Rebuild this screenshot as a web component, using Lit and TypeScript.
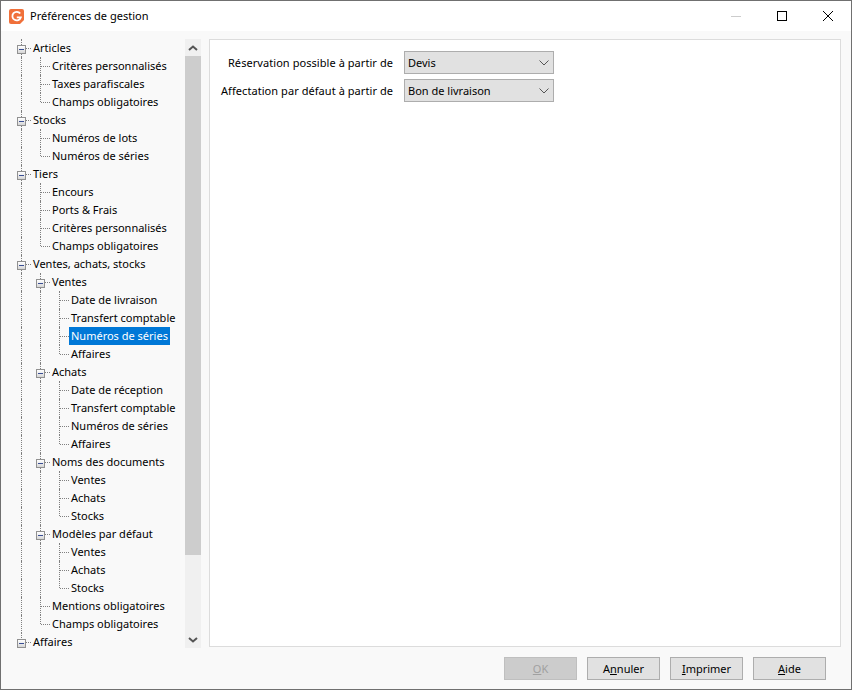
import { LitElement, html, css, nothing } from "lit";
import { customElement } from "lit/decorators.js";

const ROWS: [number, string, boolean?, boolean?][] = [
  [0, "Articles", true], [1, "Critères personnalisés"], [1, "Taxes parafiscales"], [1, "Champs obligatoires"],
  [0, "Stocks", true], [1, "Numéros de lots"], [1, "Numéros de séries"],
  [0, "Tiers", true], [1, "Encours"], [1, "Ports & Frais"], [1, "Critères personnalisés"], [1, "Champs obligatoires"],
  [0, "Ventes, achats, stocks", true],
  [1, "Ventes", true], [2, "Date de livraison"], [2, "Transfert comptable"], [2, "Numéros de séries", false, true], [2, "Affaires"],
  [1, "Achats", true], [2, "Date de réception"], [2, "Transfert comptable"], [2, "Numéros de séries"], [2, "Affaires"],
  [1, "Noms des documents", true], [2, "Ventes"], [2, "Achats"], [2, "Stocks"],
  [1, "Modèles par défaut", true], [2, "Ventes"], [2, "Achats"], [2, "Stocks"],
  [1, "Mentions obligatoires"], [1, "Champs obligatoires"],
  [0, "Affaires", true],
];

function continues(i: number, depth: number): boolean {
  for (let j = i + 1; j < ROWS.length; j++) {
    if (ROWS[j][0] < depth) return false;
    if (ROWS[j][0] === depth) return true;
  }
  return false;
}

@customElement("app-root")
export class AppRoot extends LitElement {
  static styles = css`
    :host { display: block; width: 852px; height: 690px; font-family: "Noto Sans", sans-serif; font-size: 11px; color: #000; }
    * { box-sizing: border-box; }
    .win { width: 852px; height: 690px; border: 1px solid #707070; background: #f9f9f9; display: flex; flex-direction: column; }
    .title { height: 30px; flex: none; background: #fff; display: flex; align-items: center; padding-left: 8px; }
    .title .logo { width: 15px; height: 15px; margin-right: 6px; flex: none; }
    .title .t { flex: 1; margin-bottom: 2px; }
    .wb { width: 46px; height: 30px; display: flex; align-items: center; justify-content: center; }
    .main { flex: 1; display: flex; min-height: 0; padding: 8px 10px 0 11px; }
    .side { width: 189px; height: 609px; flex: none; display: flex; }
    .tree { width: 173px; flex: none; overflow: hidden; white-space: nowrap; }
    .row { height: 18px; display: flex; }
    .cell { width: 19px; flex: none; position: relative; height: 18px; }
    .v { position: absolute; left: 9px; top: 0; bottom: 0; border-left: 1px dotted #808080; }
    .v.half { bottom: 9px; }
    .h { position: absolute; left: 10px; right: 0; top: 9px; border-top: 1px dotted #808080; }
    .exp { position: absolute; left: 5px; top: 6px; width: 9px; height: 9px; border: 1px solid #919191; background: linear-gradient(#fff, #d6d6d6); display: flex; align-items: center; justify-content: center; }
    .exp i { width: 5px; height: 1px; background: #3a4f94; display: block; }
    .label { padding: 0 2px; height: 18px; line-height: 18px; color: #000; flex: none; }
    .label.sel { background: #0078d7; color: #fff; }
    .sb { width: 16px; flex: none; background: #f0f0f0; display: flex; flex-direction: column; }
    .sb .btn { height: 17px; flex: none; display: flex; align-items: center; justify-content: center; }
    .sb .thumb { height: 499px; flex: none; background: #cdcdcd; }
    .sb .sp { flex: 1; }
    .panel { flex: 1; margin-left: 8px; background: #fff; height: 608px; border: 1px solid #dcdcdc; padding: 11px 0 0 10px; display: grid; grid-template-columns: 173px 150px; grid-auto-rows: 23px; row-gap: 5px; align-content: start; column-gap: 11px; }
    .lab { text-align: right; line-height: 23px; white-space: nowrap; letter-spacing: 0.06px; }
    .sel-box { height: 23px; background: #e1e1e1; border: 1px solid #adadad; display: flex; align-items: center; justify-content: space-between; padding: 0 4px 0 3px; }
    .foot { height: 41px; flex: none; display: flex; justify-content: flex-end; gap: 10px; padding: 9px 25px 0 0; }
    .b { width: 73px; height: 23px; background: #e1e1e1; border: 1px solid #adadad; display: flex; align-items: center; justify-content: center; }
    .b.dis { background: #cccccc; color: #a0a0a0; border-color: #bfbfbf; }
    u { text-underline-offset: 1px; }
  `;

  private chevron() {
    return html`<svg width="10" height="6" viewBox="0 0 10 6"><path d="M.5.5 5 5 9.5.5" fill="none" stroke="#555" stroke-width="1"/></svg>`;
  }

  render() {
    return html`<div class="win">
      <div class="title">
        <svg class="logo" viewBox="0 0 15 15"><path d="M2 0h11a2 2 0 0 1 2 2v9l-4 4H2a2 2 0 0 1-2-2V2a2 2 0 0 1 2-2z" fill="#f0703a"/><path d="M11.2 4.6A4.3 4.3 0 1 0 11.8 8.4H7.8" fill="none" stroke="#fff" stroke-width="1.8"/></svg>
        <span class="t">Préférences de gestion</span>
        <div class="wb"><svg width="10" height="1"><rect width="10" height="1" fill="#ccc"/></svg></div>
        <div class="wb"><svg width="10" height="10"><rect x=".5" y=".5" width="9" height="9" fill="none" stroke="#000"/></svg></div>
        <div class="wb"><svg width="10" height="10"><path d="M0 0 10 10M10 0 0 10" stroke="#000" stroke-width="1"/></svg></div>
      </div>
      <div class="main">
        <div class="side">
          <div class="tree">
            ${ROWS.map(([lvl, text, exp, sel], i) => html`<div class="row">
              ${Array.from({ length: lvl }, (_, d) => html`<div class="cell">${continues(i, d) ? html`<div class="v"></div>` : nothing}</div>`)}
              <div class="cell">
                <div class="v ${continues(i, lvl) ? "" : "half"}"></div>
                <div class="h"></div>
                ${exp ? html`<div class="exp"><i></i></div>` : nothing}
              </div>
              <div class="label ${sel ? "sel" : ""}">${text}</div>
            </div>`)}
          </div>
          <div class="sb">
            <div class="btn"><svg width="10" height="6" viewBox="0 0 10 6"><path d="M1 5 5 1.5 9 5" fill="none" stroke="#555" stroke-width="2"/></svg></div>
            <div class="thumb"></div>
            <div class="sp"></div>
            <div class="btn"><svg width="10" height="6" viewBox="0 0 10 6"><path d="M1 1 5 4.5 9 1" fill="none" stroke="#555" stroke-width="2"/></svg></div>
          </div>
        </div>
        <div class="panel">
          <div class="lab">Réservation possible à partir de</div>
          <div class="sel-box"><span>Devis</span>${this.chevron()}</div>
          <div class="lab">Affectation par défaut à partir de</div>
          <div class="sel-box"><span>Bon de livraison</span>${this.chevron()}</div>
        </div>
      </div>
      <div class="foot">
        <div class="b dis"><span><u>O</u>K</span></div>
        <div class="b"><span>A<u>n</u>nuler</span></div>
        <div class="b"><span><u>I</u>mprimer</span></div>
        <div class="b"><span><u>A</u>ide</span></div>
      </div>
    </div>`;
  }
}
